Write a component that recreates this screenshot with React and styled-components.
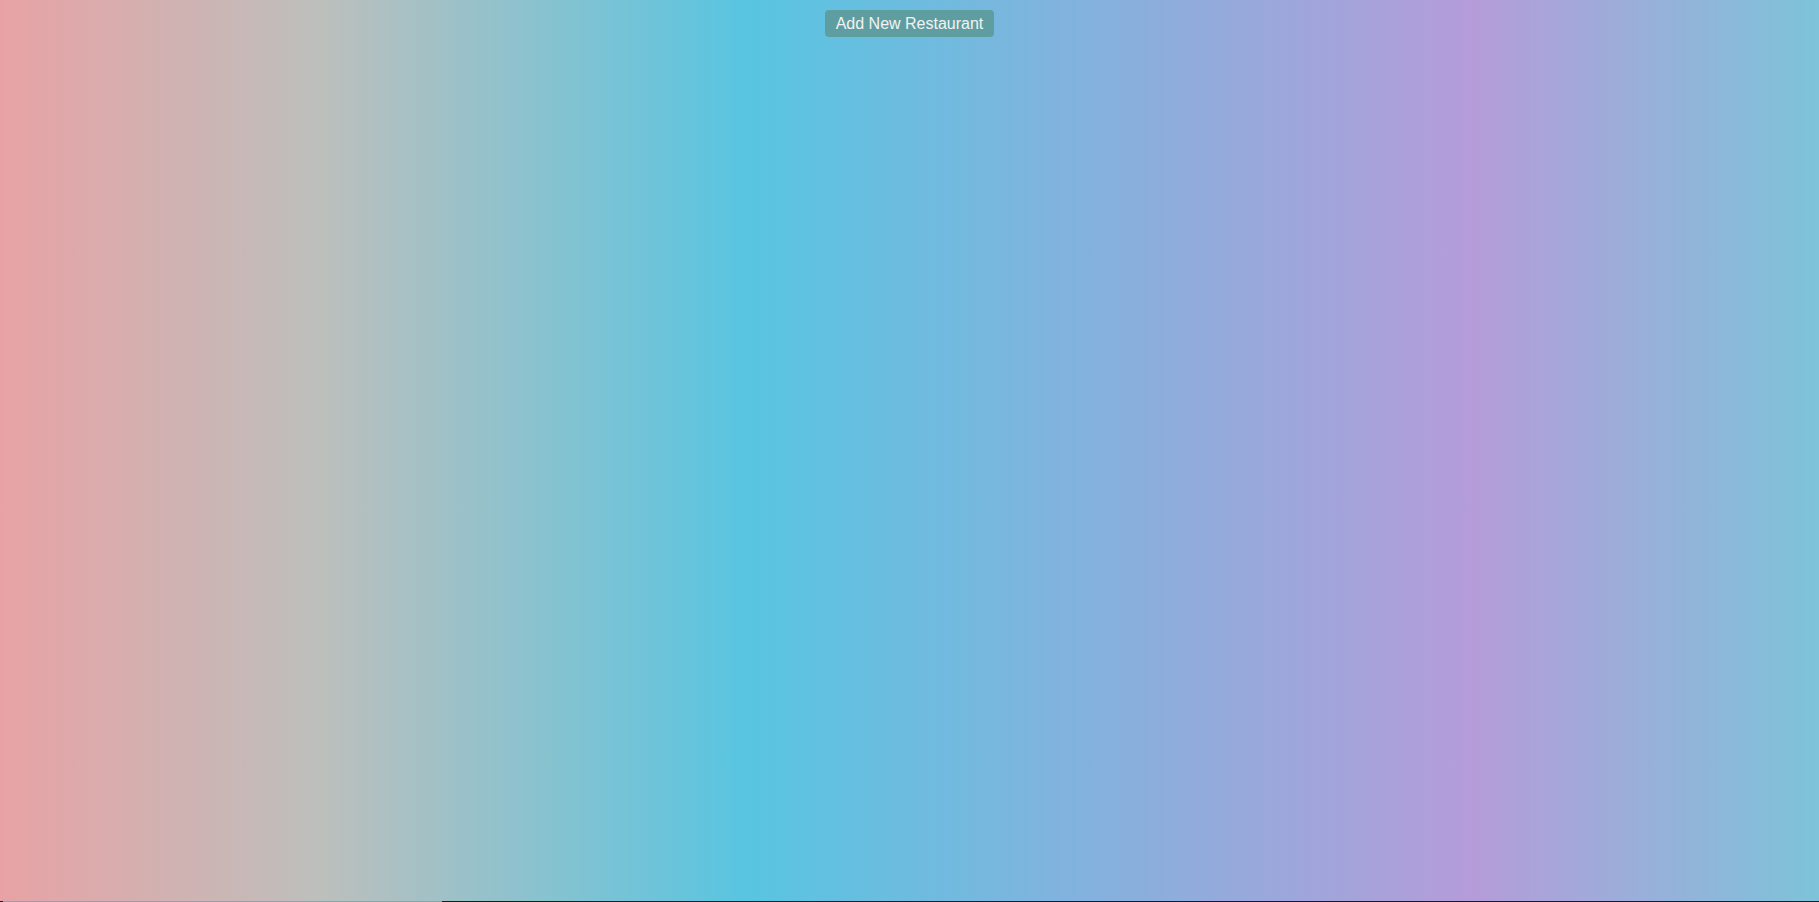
import React from "react";
import styled, { createGlobalStyle } from "styled-components";

const GlobalStyle = createGlobalStyle`
  html, body {
    margin: 0;
    padding: 0;
    background: #1b1b1f;
  }
  body {
    font-family: "Liberation Sans", Arial, sans-serif;
  }
`;

const Page = styled.div`
  height: 901px;
  display: flex;
  flex-direction: column;
  align-items: center;
  background: linear-gradient(to right, #e8a2a5 0%, #bdbfbc 17.5%, #58c5e1 41%, #b49cd9 81%, #7dc3d9 100%);
`;

const AddButton = styled.button`
  margin-top: 10px;
  height: 27px;
  padding: 0 11px;
  border: none;
  border-radius: 4px;
  background: #5f9ea0;
  color: #f2f2f2;
  font-family: "Liberation Sans", Arial, sans-serif;
  font-size: 16px;
  cursor: pointer;
`;

const BottomEdge = styled.div`
  height: 1px;
  display: flex;
`;

const EdgeSegment = styled.div`
  width: ${(p) => p.$w};
  flex: ${(p) => (p.$grow ? 1 : "none")};
  background: ${(p) => p.$color};
`;

export default function App() {
  return (
    <>
      <GlobalStyle />
      <Page>
        <AddButton>Add New Restaurant</AddButton>
      </Page>
      <BottomEdge>
        <EdgeSegment $w="3px" $color="#1b1b1f" />
        <EdgeSegment $w="439px" $color="#86a8a9" />
        <EdgeSegment $grow $color="#1b1b1f" />
      </BottomEdge>
    </>
  );
}
